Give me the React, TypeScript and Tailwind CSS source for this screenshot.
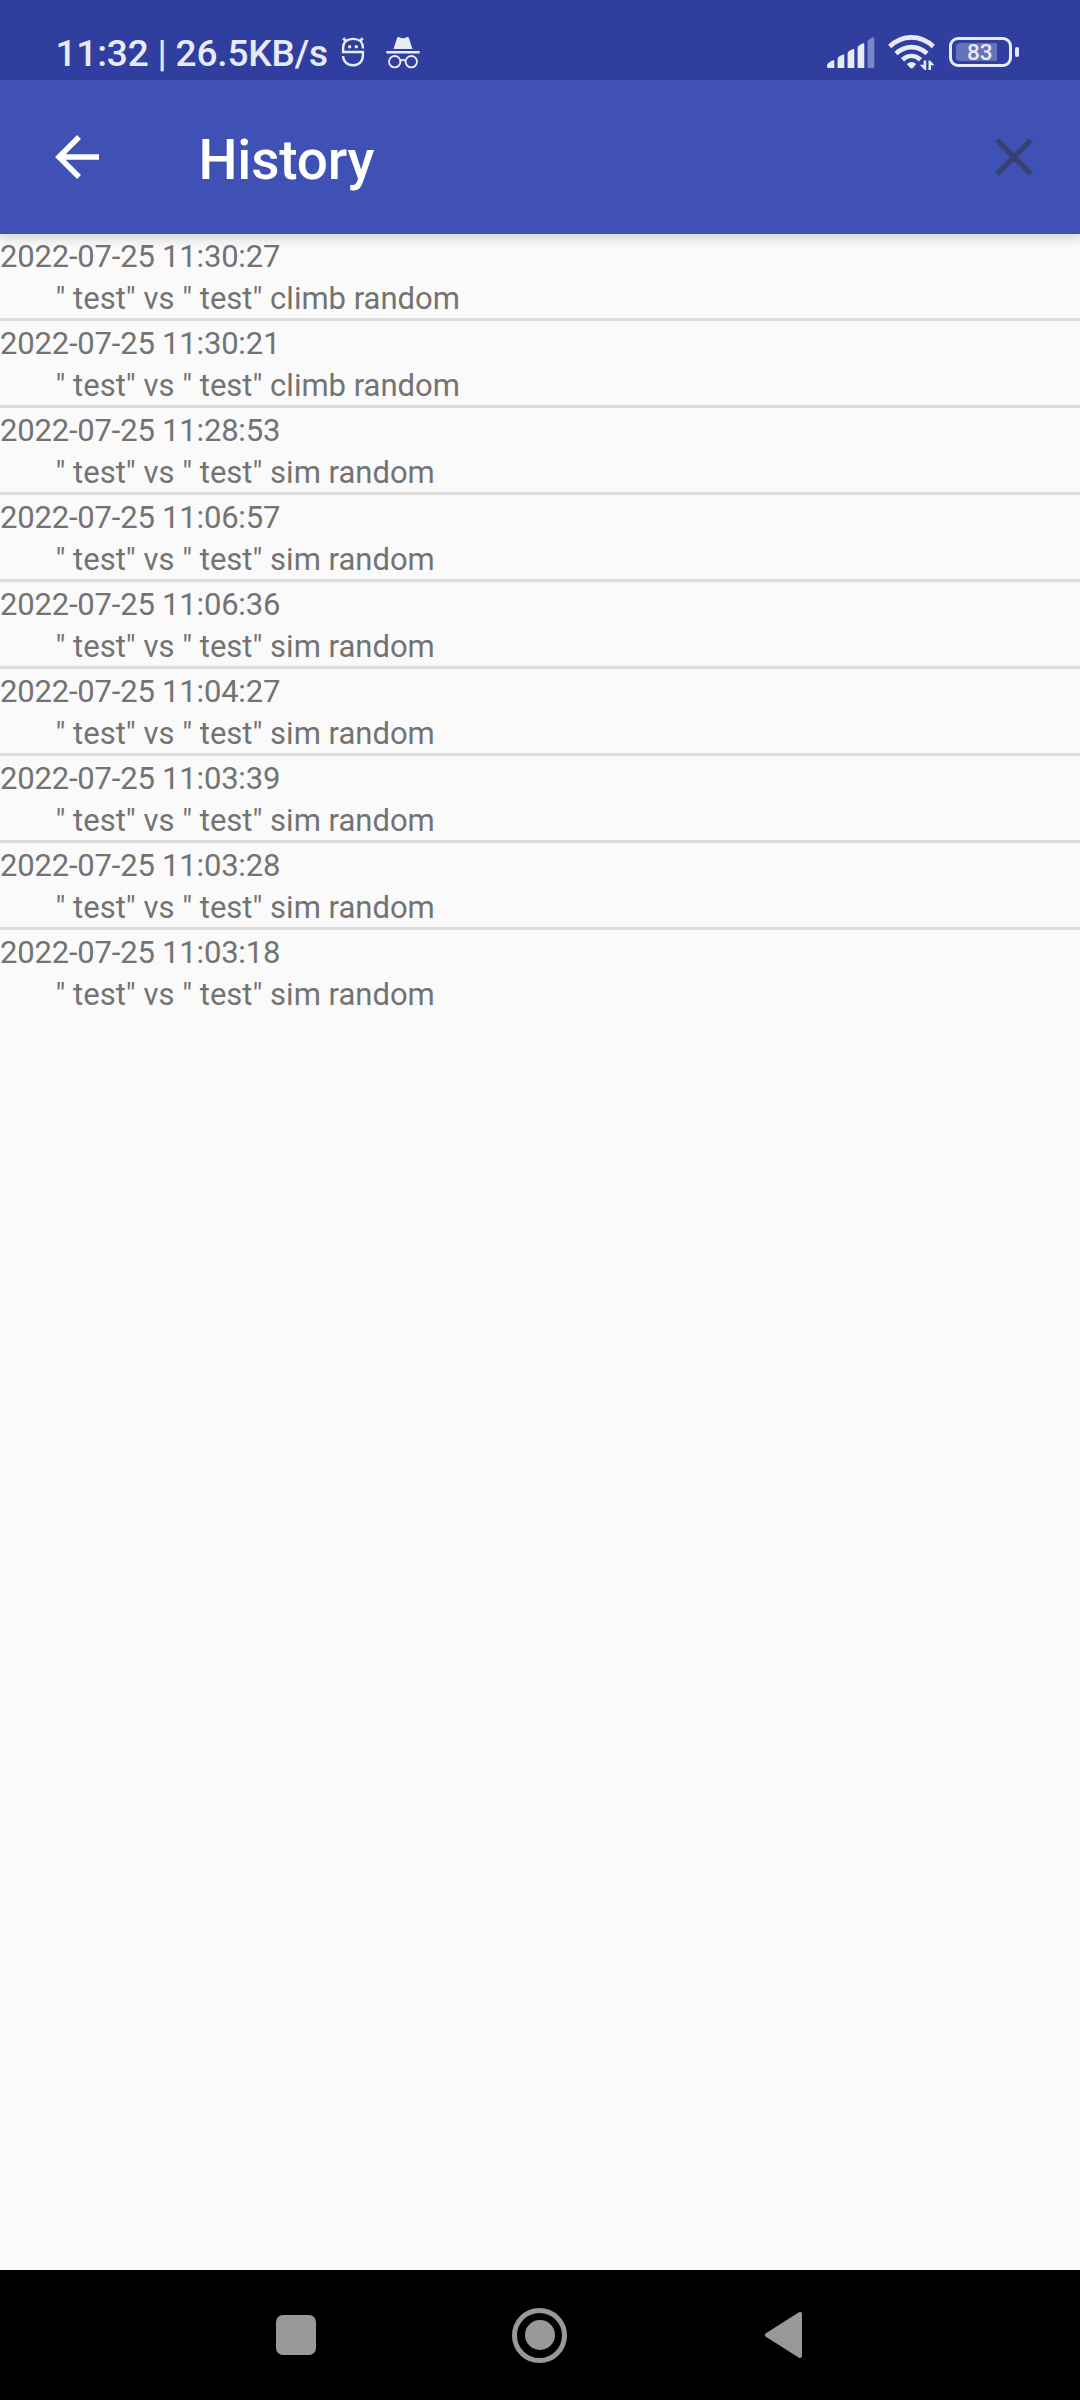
const entries = [
  { time: '2022-07-25 11:30:27', mode: 'climb random' },
  { time: '2022-07-25 11:30:21', mode: 'climb random' },
  { time: '2022-07-25 11:28:53', mode: 'sim random' },
  { time: '2022-07-25 11:06:57', mode: 'sim random' },
  { time: '2022-07-25 11:06:36', mode: 'sim random' },
  { time: '2022-07-25 11:04:27', mode: 'sim random' },
  { time: '2022-07-25 11:03:39', mode: 'sim random' },
  { time: '2022-07-25 11:03:28', mode: 'sim random' },
  { time: '2022-07-25 11:03:18', mode: 'sim random' },
];

function MaskIcon() {
  return (
    <svg className="ml-[13.5px] h-[34px] w-[24px] shrink-0" viewBox="0 0 24 34" fill="none" stroke="#e8eaf7" strokeWidth="2.4">
      <path d="M2.2 3.2 5 6M21.800 3.200 19 6" strokeWidth="2.800" />
      <path d="M21.900 13.500V12.500C21.900 7 17.800 3.900 12 3.900S2.100 7 2.100 12.500v4.500h19.800v3.500c0 5.700-4.100 9.800-9.900 9.800s-9.900-4.100-9.900-9.300" />
      <circle cx="8.700" cy="11.700" r="1.700" fill="#e8eaf7" stroke="none" />
      <circle cx="15.300" cy="11.700" r="1.700" fill="#e8eaf7" stroke="none" />
    </svg>
  );
}

function IncognitoIcon() {
  return (
    <svg className="ml-[20.5px] h-[34px] w-[34px] shrink-0" viewBox="0 0 34 34" fill="none" stroke="#e8eaf7" strokeWidth="1.9">
      <path d="M7.500 14 11 3.200c.4-1.200 1.300-1.500 2.300-.9 2.200 1.200 5.200 1.200 7.400 0 1-.6 1.900-.3 2.300.9L26.500 14z" fill="#e8eaf7" stroke="none" />
      <path d="M.3 17.300h33.400" strokeWidth="2.600" />
      <circle cx="8.700" cy="26.700" r="5.700" />
      <circle cx="25.300" cy="26.700" r="5.700" />
      <path d="M14.200 26c1.500-1.200 4.100-1.200 5.600 0" />
    </svg>
  );
}

function SignalIcon() {
  return (
    <svg className="h-[36px] w-[48px] shrink-0" viewBox="0 0 48 36" fill="#e8eaf7">
      <path d="M0 31.500q0-1.500 1.200-2.200L5 26.500q2.300-1 2.300.7V34H1.500Q0 34 0 32.500zM10.600 25q0-1.500 1.200-2.200l3.500-2q2-.8 2 .8V34h-6.700zM20.600 19.500q0-1.500 1.200-2.200l3.500-2q2-.8 2 .8V34h-6.700zM30.600 14q0-1.500 1.200-2.200l3.500-2.300q2-.8 2 .8V34h-6.700z" />
      <path d="M40.600 8q0-1.500 1.200-2.200l3.500-2.300q2-.8 2 .8V33q0 1-1 1h-5.700z" opacity=".42" />
    </svg>
  );
}

function WifiIcon() {
  return (
    <svg className="ml-[12.5px] h-[38px] w-[48px] shrink-0" viewBox="0 0 48 38" fill="none" stroke="#e8eaf7" strokeWidth="4.600">
      <path d="M1.700 13.500C14.500 1.300 32.500 1.300 45.300 13.500" />
      <path d="M8 20.500C17.500 12 29.500 12 39 20.500" />
      <path d="M14.500 26.800C20 21.800 27 21.800 32.500 26.800" />
      <path d="M18.800 31q4.700-4 9.400 0l-3.200 3.700q-1.500 1.500-3 0z" fill="#e8eaf7" stroke="none" />
      <path d="M38.200 27.500V37h-1.500L31.800 31.800h3.800v-4.300zM40.500 37v-9.500H42l4.500 4.700H43V37z" fill="#e8eaf7" stroke="none" />
    </svg>
  );
}

function Battery() {
  return (
    <div className="ml-[13.5px] flex shrink-0 items-center gap-[3px]">
      <div className="flex h-[30px] w-[63px] items-center rounded-[9px] border-[3px] border-[#e8eaf7] pl-[4px]">
        <div className="flex h-[18px] w-[41px] items-center rounded-l-[4px] bg-[#6872b9]">
          <span className="block w-[41px] pl-[11px] text-[22.5px] leading-[18px] font-medium text-[#e8eaf7]">83</span>
        </div>
      </div>
      <div className="h-[10px] w-[4px] rounded-[2px] bg-[#e8eaf7]" />
    </div>
  );
}

export default function App() {
  return (
    <div className="flex h-[2400px] w-[1080px] flex-col overflow-hidden bg-[#fafafa] font-[Roboto,sans-serif]">
      <div className="flex h-[80px] shrink-0 items-start justify-between bg-[#303f9f] text-[#e8eaf7]">
        <div className="flex items-start pt-[35px] pl-[55.5px]">
          <span className="pt-px text-[37px] leading-[36px] font-medium tracking-[-0.17px] whitespace-nowrap">11:32 | 26.5KB/s</span>
          <MaskIcon />
          <IncognitoIcon />
        </div>
        <div className="flex items-center pt-[33px] pr-[61px]">
          <SignalIcon />
          <WifiIcon />
          <Battery />
        </div>
      </div>

      <header className="relative z-10 flex h-[154px] shrink-0 items-center bg-[#3f51b5] shadow-[0_4px_11px_rgba(0,0,0,0.16)]">
        <svg className="ml-[55px] h-[44px] w-[44px]" viewBox="0 0 44 44" fill="none" stroke="#fff" strokeWidth="5.500">
          <path d="M44 22H5M24 2 4 22l20 20" />
        </svg>
        <h1 className="mt-[6px] ml-[99.5px] text-[55px] leading-[64px] font-medium tracking-[-0.2px] text-white">History</h1>
        <svg className="mr-[47px] ml-auto h-[38px] w-[38px]" viewBox="0 0 38 38" fill="none" stroke="#37406f" strokeWidth="5.200">
          <path d="m2 2 34 34M36 2 2 36" />
        </svg>
      </header>

      <main className="flex-1 text-[31px] leading-[42px] text-[#737373]">
        {entries.map((entry, i) => (
          <div
            key={entry.time}
            className={
              i < entries.length - 1
                ? 'h-[87px] border-b-3 border-[#dcdcdc] pt-[2px]'
                : 'h-[87px] pt-[2px]'
            }
          >
            <div className="tracking-[-0.190px]">{entry.time}</div>
            <div className="pl-[55.5px] whitespace-pre">{'" test" vs " test" ' + entry.mode}</div>
          </div>
        ))}
      </main>

      <nav className="flex h-[130px] shrink-0 items-center bg-black">
        <div className="ml-[275.5px] h-[40px] w-[40px] rounded-[7px] bg-[#999]" />
        <div className="ml-[196.5px] flex h-[55px] w-[55px] items-center justify-center rounded-full border-[5px] border-[#999]">
          <div className="h-[30px] w-[30px] rounded-full bg-[#999]" />
        </div>
        <svg className="ml-[198px] h-[46px] w-[37px]" viewBox="0 0 37 46" fill="#999" stroke="#999" strokeWidth="4" strokeLinejoin="round">
          <path d="M2 23 35 2v42z" />
        </svg>
      </nav>
    </div>
  );
}
